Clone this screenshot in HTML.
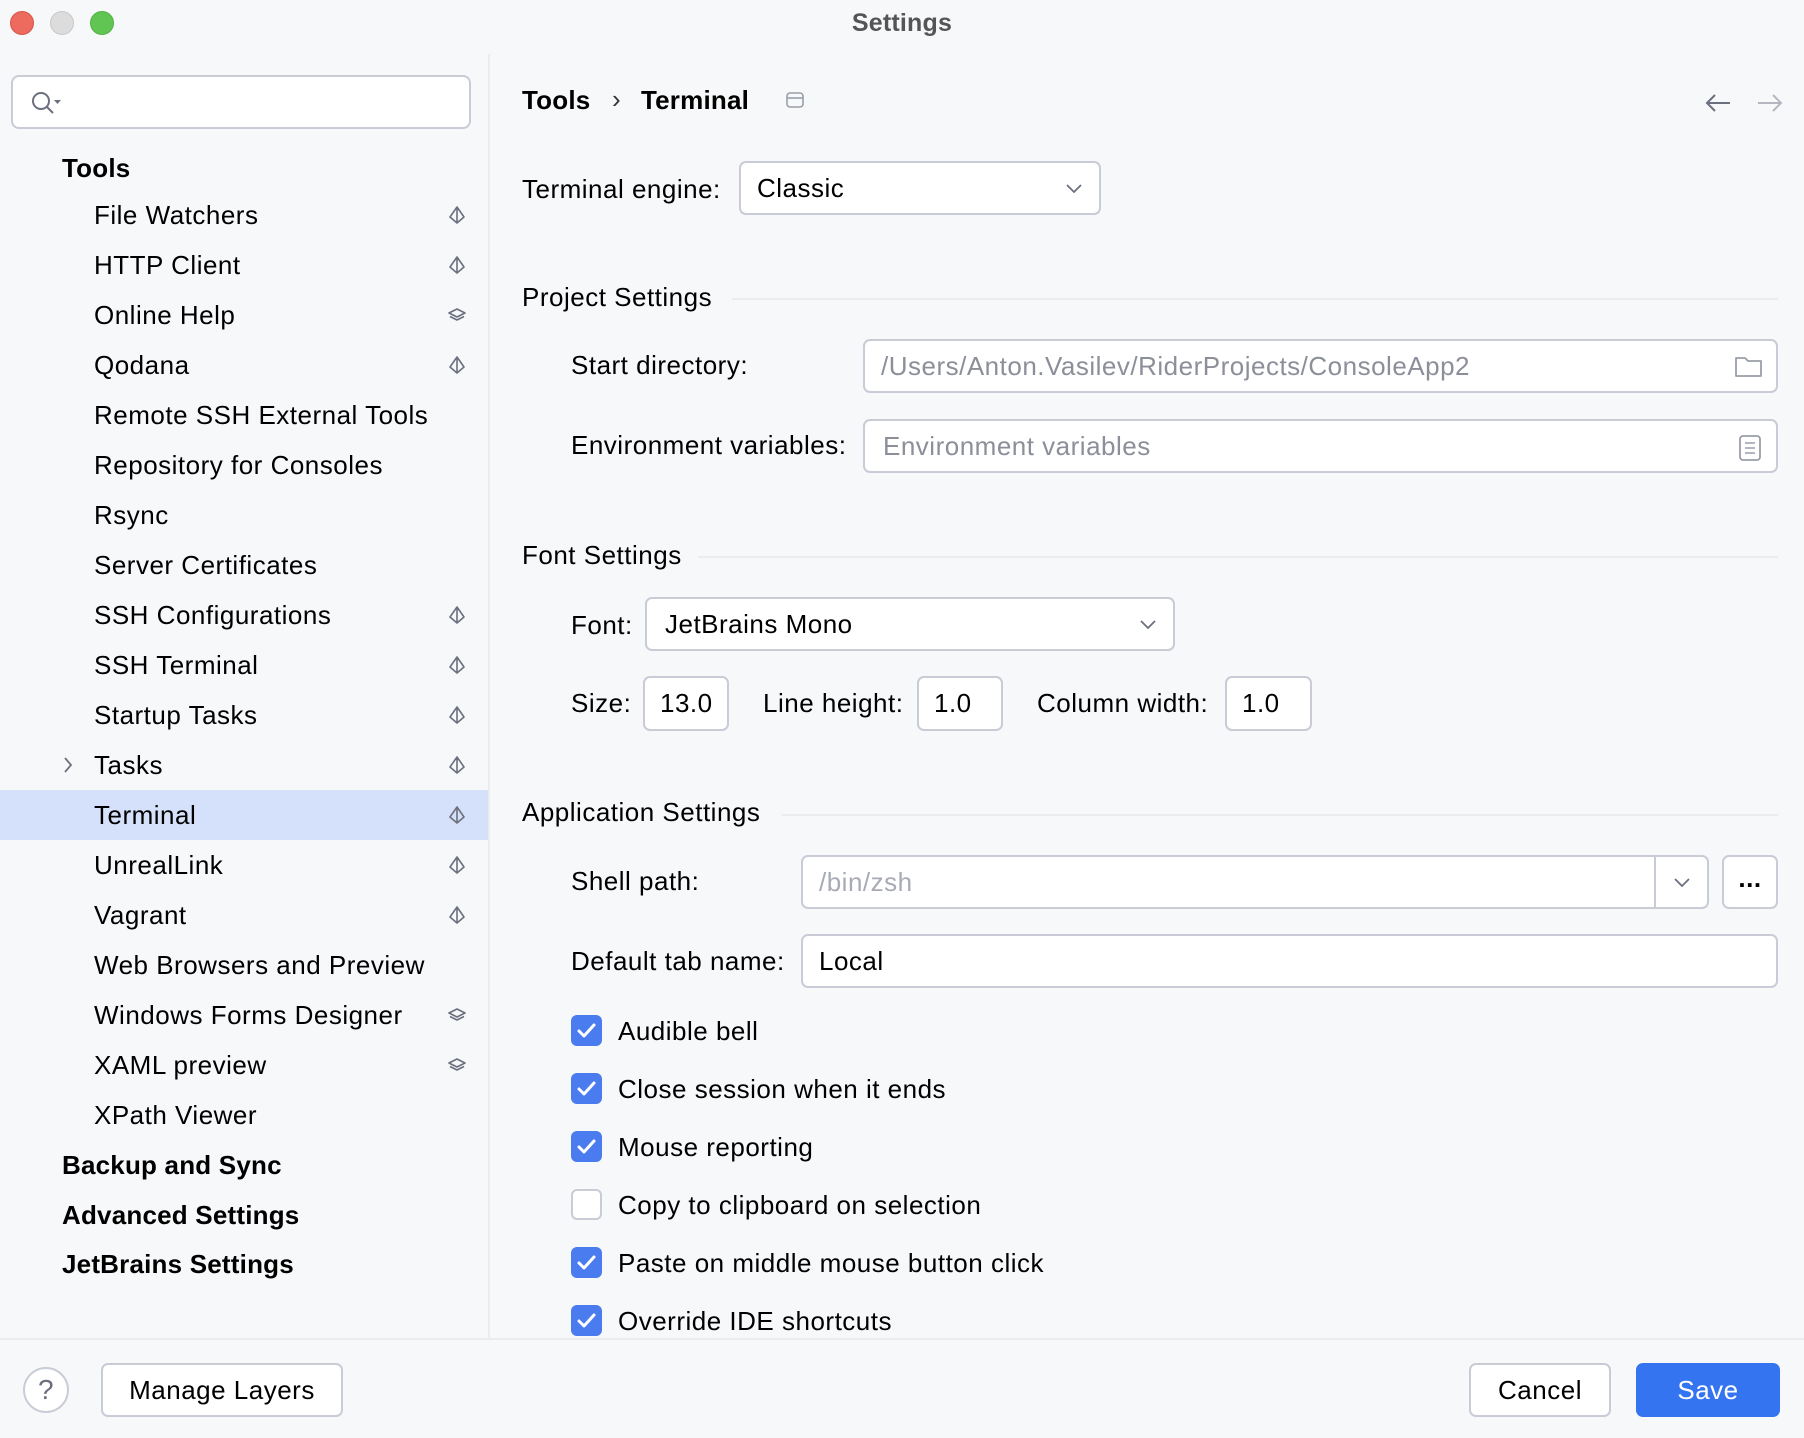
<!DOCTYPE html>
<html><head><meta charset="utf-8"><style>
*{margin:0;padding:0;box-sizing:border-box}
body{width:1804px;height:1438px;background:#f7f8fa;font-family:"Liberation Sans",sans-serif;color:#000;position:relative;overflow:hidden;font-size:26px;letter-spacing:0.5px}
.a{position:absolute;white-space:nowrap;line-height:30px}
.b{font-weight:bold;letter-spacing:0.2px}
.box{position:absolute;background:#fff;border:2px solid #c9ccd6;border-radius:7px}
.ph{color:#8c8f99}
.hl{position:absolute;height:2px;background:#ebecf0}
.cb{position:absolute;left:571px;width:31px;height:31px;border-radius:6px;background:#4a7cf0}
.cb svg{position:absolute;left:4px;top:4px}
.cbo{background:#fff;border:2px solid #c9ccd6}
.ic{position:absolute;left:447px}
</style></head><body>
<div style="position:absolute;left:10px;top:11px;width:24px;height:24px;border-radius:50%;background:#ed6a5e;border:1px solid #d65548"></div>
<div style="position:absolute;left:50px;top:11px;width:24px;height:24px;border-radius:50%;background:#dcdcdc;border:1px solid #c8c8c8"></div>
<div style="position:absolute;left:90px;top:11px;width:24px;height:24px;border-radius:50%;background:#61c554;border:1px solid #52b044"></div>
<div class="a b" style="left:0;width:1804px;text-align:center;top:8px;font-size:25px;color:#555">Settings</div>
<div style="position:absolute;left:488px;top:54px;width:2px;height:1284px;background:#ebecf0"></div>
<div class="box" style="left:11px;top:75px;width:460px;height:54px;border-radius:8px">
<svg style="position:absolute;left:16px;top:13px" width="36" height="26" viewBox="0 0 36 26"><circle cx="12" cy="11" r="8" fill="none" stroke="#6c707e" stroke-width="2"/><path d="M18 17l6 6" stroke="#6c707e" stroke-width="2"/><path d="M25 10h7l-3.5 4z" fill="#6c707e"/></svg>
</div>
<div style="position:absolute;left:0;top:790px;width:488px;height:50px;background:#d5e1fa"></div>
<div class="a b" style="left:62px;top:153px">Tools</div>
<div class="a" style="left:94px;top:200px">File Watchers</div>
<div class="a" style="left:94px;top:250px">HTTP Client</div>
<div class="a" style="left:94px;top:300px">Online Help</div>
<div class="a" style="left:94px;top:350px">Qodana</div>
<div class="a" style="left:94px;top:400px">Remote SSH External Tools</div>
<div class="a" style="left:94px;top:450px">Repository for Consoles</div>
<div class="a" style="left:94px;top:500px">Rsync</div>
<div class="a" style="left:94px;top:550px">Server Certificates</div>
<div class="a" style="left:94px;top:600px">SSH Configurations</div>
<div class="a" style="left:94px;top:650px">SSH Terminal</div>
<div class="a" style="left:94px;top:700px">Startup Tasks</div>
<svg style="position:absolute;left:62px;top:756px" width="12" height="18"><path d="M3 2l6 7-6 7" fill="none" stroke="#6c707e" stroke-width="1.8"/></svg>
<div class="a" style="left:94px;top:750px">Tasks</div>
<div class="a" style="left:94px;top:800px">Terminal</div>
<div class="a" style="left:94px;top:850px">UnrealLink</div>
<div class="a" style="left:94px;top:900px">Vagrant</div>
<div class="a" style="left:94px;top:950px">Web Browsers and Preview</div>
<div class="a" style="left:94px;top:1000px">Windows Forms Designer</div>
<div class="a" style="left:94px;top:1050px">XAML preview</div>
<div class="a" style="left:94px;top:1100px">XPath Viewer</div>
<div class="a b" style="left:62px;top:1150px">Backup and Sync</div>
<div class="a b" style="left:62px;top:1200px">Advanced Settings</div>
<div class="a b" style="left:62px;top:1249px">JetBrains Settings</div>
<svg width="0" height="0" style="position:absolute"><defs>
<symbol id="pyr" viewBox="0 0 20 20"><path d="M10 2L3 12l7 6 7-6z M10 2v16" fill="none" stroke="#6c707e" stroke-width="1.6" stroke-linejoin="round"/></symbol>
<symbol id="lay" viewBox="0 0 20 20"><path d="M10 4l8 4-8 4-8-4z" fill="none" stroke="#6c707e" stroke-width="1.6" stroke-linejoin="round"/><path d="M3 11.5l7 3.5 7-3.5" fill="none" stroke="#6c707e" stroke-width="1.6" stroke-linejoin="round"/></symbol>
</defs></svg>
<svg class="ic" style="top:205px" width="20" height="20"><use href="#pyr"/></svg>
<svg class="ic" style="top:255px" width="20" height="20"><use href="#pyr"/></svg>
<svg class="ic" style="top:305px" width="20" height="20"><use href="#lay"/></svg>
<svg class="ic" style="top:355px" width="20" height="20"><use href="#pyr"/></svg>
<svg class="ic" style="top:605px" width="20" height="20"><use href="#pyr"/></svg>
<svg class="ic" style="top:655px" width="20" height="20"><use href="#pyr"/></svg>
<svg class="ic" style="top:705px" width="20" height="20"><use href="#pyr"/></svg>
<svg class="ic" style="top:755px" width="20" height="20"><use href="#pyr"/></svg>
<svg class="ic" style="top:805px" width="20" height="20"><use href="#pyr"/></svg>
<svg class="ic" style="top:855px" width="20" height="20"><use href="#pyr"/></svg>
<svg class="ic" style="top:905px" width="20" height="20"><use href="#pyr"/></svg>
<svg class="ic" style="top:1005px" width="20" height="20"><use href="#lay"/></svg>
<svg class="ic" style="top:1055px" width="20" height="20"><use href="#lay"/></svg>
<div class="a b" style="left:522px;top:85px">Tools</div>
<div class="a" style="left:612px;top:84px;color:#333">›</div>
<div class="a b" style="left:641px;top:85px">Terminal</div>
<svg style="position:absolute;left:786px;top:92px" width="18" height="16"><rect x="1" y="1" width="16" height="14" rx="3" fill="none" stroke="#9a9ea8" stroke-width="1.6"/><path d="M1 6h16" stroke="#9a9ea8" stroke-width="1.6"/></svg>
<svg style="position:absolute;left:1704px;top:93px" width="28" height="20"><path d="M26 10H3M11 2L3 10l8 8" fill="none" stroke="#6c707e" stroke-width="2"/></svg>
<svg style="position:absolute;left:1756px;top:93px" width="28" height="20"><path d="M2 10h23M17 2l8 8-8 8" fill="none" stroke="#b4b7bf" stroke-width="2"/></svg>
<div class="a" style="left:522px;top:174px">Terminal engine:</div>
<div class="box" style="left:739px;top:161px;width:362px;height:54px"><div class="a" style="left:16px;top:10px">Classic</div>
<svg style="position:absolute;right:16px;top:20px" width="18" height="12"><path d="M2 2l7 7 7-7" fill="none" stroke="#6c707e" stroke-width="1.8"/></svg></div>
<div class="a" style="left:522px;top:282px">Project Settings</div>
<div class="hl" style="left:732px;top:298px;width:1046px"></div>
<div class="a" style="left:571px;top:350px">Start directory:</div>
<div class="box" style="left:863px;top:339px;width:915px;height:54px"><div class="a ph" style="left:16px;top:10px">/Users/Anton.Vasilev/RiderProjects/ConsoleApp2</div>
<svg style="position:absolute;right:12px;top:14px" width="30" height="24"><path d="M2 3h9l3 3h13v15H2z" fill="none" stroke="#9a9ea8" stroke-width="1.8" stroke-linejoin="round"/></svg></div>
<div class="a" style="left:571px;top:430px">Environment variables:</div>
<div class="box" style="left:863px;top:419px;width:915px;height:54px"><div class="a ph" style="left:18px;top:10px">Environment variables</div>
<svg style="position:absolute;right:14px;top:13px" width="24" height="28"><rect x="2" y="2" width="20" height="24" rx="3" fill="none" stroke="#9a9ea8" stroke-width="1.8"/><path d="M7 9h10M7 14h10M7 19h10" stroke="#9a9ea8" stroke-width="1.6"/></svg></div>
<div class="a" style="left:522px;top:540px">Font Settings</div>
<div class="hl" style="left:698px;top:556px;width:1080px"></div>
<div class="a" style="left:571px;top:610px">Font:</div>
<div class="box" style="left:645px;top:597px;width:530px;height:54px"><div class="a" style="left:18px;top:10px">JetBrains Mono</div>
<svg style="position:absolute;right:16px;top:20px" width="18" height="12"><path d="M2 2l7 7 7-7" fill="none" stroke="#6c707e" stroke-width="1.8"/></svg></div>
<div class="a" style="left:571px;top:688px">Size:</div>
<div class="box" style="left:643px;top:676px;width:86px;height:55px"><div class="a" style="left:15px;top:10px">13.0</div></div>
<div class="a" style="left:763px;top:688px">Line height:</div>
<div class="box" style="left:917px;top:676px;width:86px;height:55px"><div class="a" style="left:15px;top:10px">1.0</div></div>
<div class="a" style="left:1037px;top:688px">Column width:</div>
<div class="box" style="left:1225px;top:676px;width:87px;height:55px"><div class="a" style="left:15px;top:10px">1.0</div></div>
<div class="a" style="left:522px;top:797px">Application Settings</div>
<div class="hl" style="left:782px;top:814px;width:996px"></div>
<div class="a" style="left:571px;top:866px">Shell path:</div>
<div class="box" style="left:801px;top:855px;width:908px;height:54px"><div class="a ph" style="left:16px;top:10px;color:#a8abb5">/bin/zsh</div>
<div style="position:absolute;left:851px;top:0;width:2px;height:50px;background:#c9ccd6"></div>
<svg style="position:absolute;right:16px;top:20px" width="18" height="12"><path d="M2 2l7 7 7-7" fill="none" stroke="#6c707e" stroke-width="1.8"/></svg></div>
<div class="box" style="left:1722px;top:855px;width:56px;height:54px"><div class="a" style="left:0;width:52px;text-align:center;top:6px;font-weight:bold">...</div></div>
<div class="a" style="left:571px;top:946px">Default tab name:</div>
<div class="box" style="left:801px;top:934px;width:977px;height:54px"><div class="a" style="left:16px;top:10px">Local</div></div>
<div class="cb" style="top:1015px"><svg width="23" height="23"><path d="M4 12l5 5 10-11" fill="none" stroke="#fff" stroke-width="3" stroke-linecap="round" stroke-linejoin="round"/></svg></div>
<div class="a" style="left:618px;top:1016px">Audible bell</div>
<div class="cb" style="top:1073px"><svg width="23" height="23"><path d="M4 12l5 5 10-11" fill="none" stroke="#fff" stroke-width="3" stroke-linecap="round" stroke-linejoin="round"/></svg></div>
<div class="a" style="left:618px;top:1074px">Close session when it ends</div>
<div class="cb" style="top:1131px"><svg width="23" height="23"><path d="M4 12l5 5 10-11" fill="none" stroke="#fff" stroke-width="3" stroke-linecap="round" stroke-linejoin="round"/></svg></div>
<div class="a" style="left:618px;top:1132px">Mouse reporting</div>
<div class="cb cbo" style="top:1189px"></div>
<div class="a" style="left:618px;top:1190px">Copy to clipboard on selection</div>
<div class="cb" style="top:1247px"><svg width="23" height="23"><path d="M4 12l5 5 10-11" fill="none" stroke="#fff" stroke-width="3" stroke-linecap="round" stroke-linejoin="round"/></svg></div>
<div class="a" style="left:618px;top:1248px">Paste on middle mouse button click</div>
<div class="cb" style="top:1305px"><svg width="23" height="23"><path d="M4 12l5 5 10-11" fill="none" stroke="#fff" stroke-width="3" stroke-linecap="round" stroke-linejoin="round"/></svg></div>
<div class="a" style="left:618px;top:1306px">Override IDE shortcuts</div>
<div style="position:absolute;left:0;top:1338px;width:1804px;height:100px;background:#f7f8fa;border-top:2px solid #ebecf0"></div>
<div style="position:absolute;left:23px;top:1367px;width:46px;height:46px;border-radius:50%;border:2px solid #c9ccd6;background:#fff;text-align:center;line-height:42px;color:#6c707e;font-size:28px">?</div>
<div class="box" style="left:101px;top:1363px;width:242px;height:54px"><div class="a" style="left:0;width:238px;text-align:center;top:10px">Manage Layers</div></div>
<div class="box" style="left:1469px;top:1363px;width:142px;height:54px"><div class="a" style="left:0;width:138px;text-align:center;top:10px">Cancel</div></div>
<div style="position:absolute;left:1636px;top:1363px;width:144px;height:54px;border-radius:7px;background:#3574f0"><div class="a" style="left:0;width:144px;text-align:center;top:12px;color:#fff">Save</div></div>
</body></html>
